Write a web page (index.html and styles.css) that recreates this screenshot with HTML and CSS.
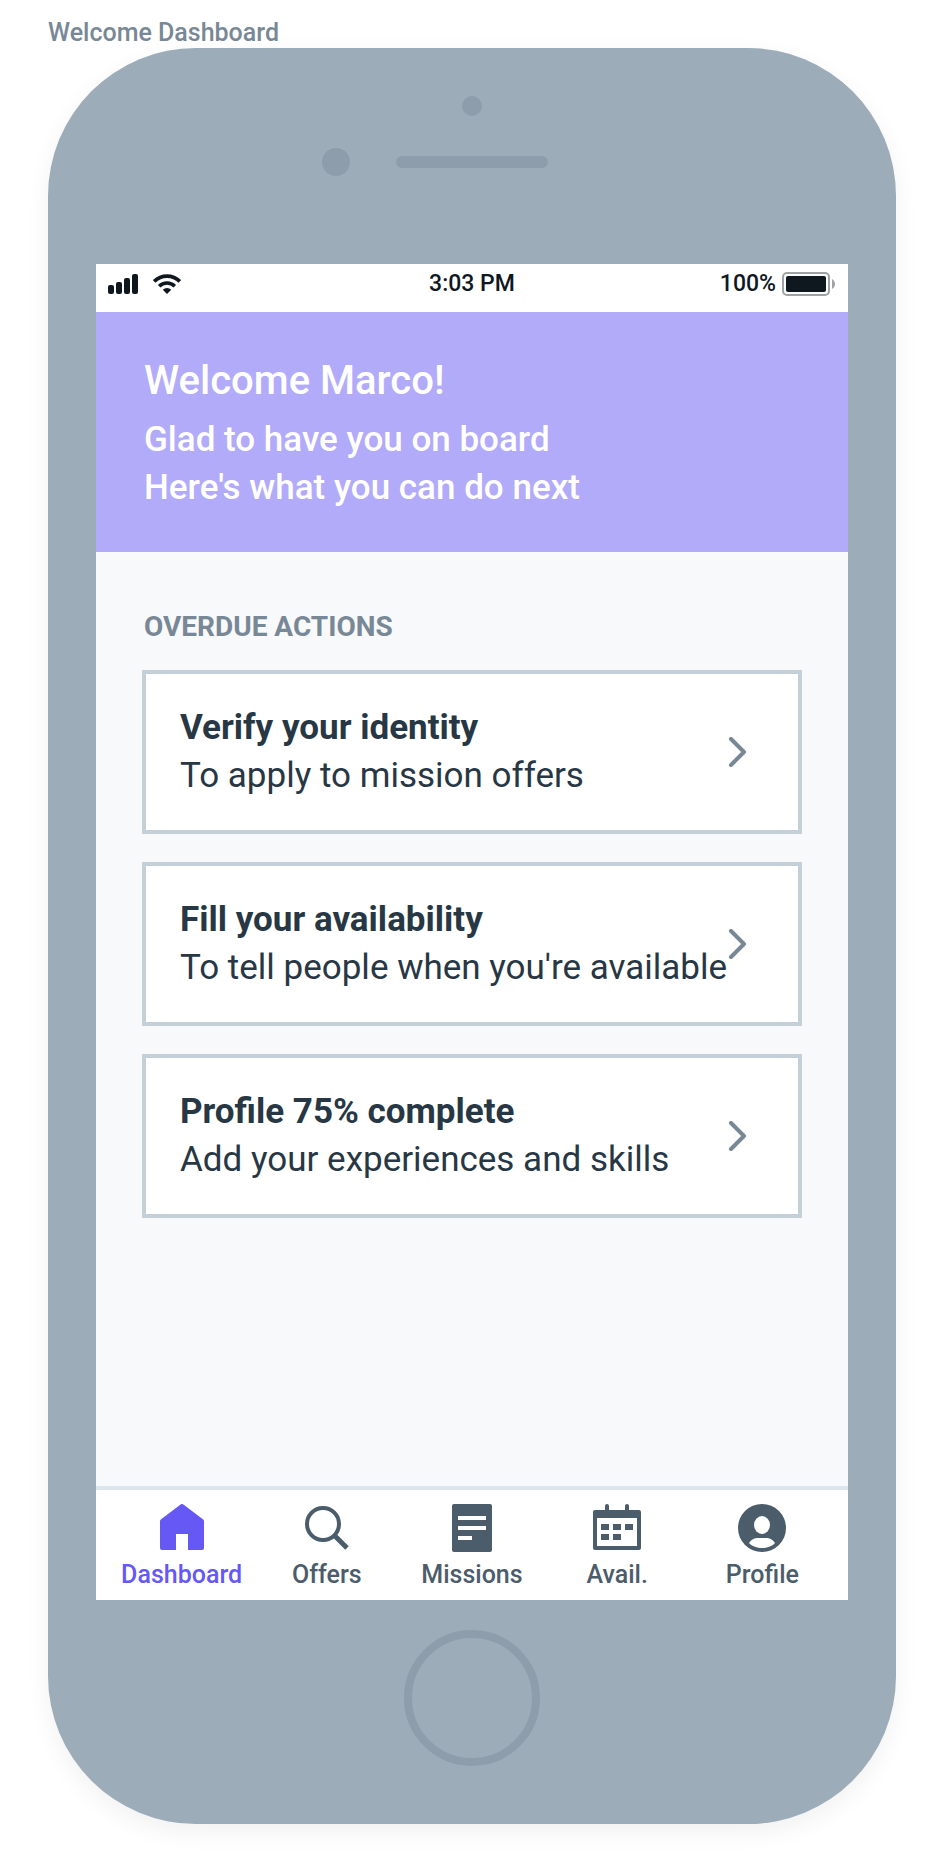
FILE: index.html
```html
<!DOCTYPE html>
<html lang="en">
<head>
  <meta charset="UTF-8">
  <meta name="viewport" content="width=device-width, initial-scale=1">
  <title>Welcome Dashboard</title>
  <link rel="stylesheet" href="styles.css">
</head>
<body>
  <p class="frame-title">Welcome Dashboard</p>

  <div class="phone">
    <!-- Camera, sensor and speaker -->
    <div class="phone-top">
      <span class="camera"></span>
      <div class="speaker-row">
        <span class="sensor"></span>
        <span class="speaker"></span>
      </div>
    </div>

    <div class="screen">
      <!-- Status bar -->
      <div class="status-bar">
        <div class="status-left">
          <svg width="30" height="20" viewBox="0 0 30 20" fill="currentColor">
            <rect x="0" y="11" width="6" height="9" rx="2"/>
            <rect x="8" y="8" width="6" height="12" rx="2"/>
            <rect x="16" y="4" width="6" height="16" rx="2"/>
            <rect x="24" y="0" width="6" height="20" rx="2"/>
          </svg>
          <svg width="28" height="20" viewBox="0 0 28 20" fill="none" stroke="currentColor" stroke-width="3.6">
            <path d="M1.2 7.4a18.1 18.1 0 0 1 25.6 0"/>
            <path d="M6.2 12.2a11 11 0 0 1 15.6 0"/>
            <path d="M14 20l-4.2-4.2a6 6 0 0 1 8.4 0z" fill="currentColor" stroke="none"/>
          </svg>
        </div>
        <span class="status-time">3:03 PM</span>
        <div class="status-right">
          <span>100%</span>
          <svg width="54" height="24" viewBox="0 0 54 24">
            <rect x="1" y="1" width="46" height="22" rx="4" fill="none" stroke="#9fa3a6" stroke-width="2"/>
            <rect x="4" y="4" width="40" height="16" rx="2" fill="#10181f"/>
            <path d="M50 7c4 2 4 8 0 10z" fill="#9fa3a6"/>
          </svg>
        </div>
      </div>

      <!-- Welcome banner -->
      <header class="banner">
        <h1>Welcome Marco!</h1>
        <p>Glad to have you on board</p>
        <p>Here's what you can do next</p>
      </header>

      <!-- Overdue actions -->
      <main class="content">
        <h2>OVERDUE ACTIONS</h2>
        <a class="card" href="#identity">
          <span class="card-text">
            <strong>Verify your identity</strong>
            <span>To apply to mission offers</span>
          </span>
          <svg class="chevron" width="18" height="30" viewBox="0 0 18 30"><path d="M3 2L16 15L3 28"/></svg>
        </a>
        <a class="card" href="#availability">
          <span class="card-text">
            <strong>Fill your availability</strong>
            <span>To tell people when you're available</span>
          </span>
          <svg class="chevron" width="18" height="30" viewBox="0 0 18 30"><path d="M3 2L16 15L3 28"/></svg>
        </a>
        <a class="card" href="#profile">
          <span class="card-text">
            <strong>Profile 75% complete</strong>
            <span>Add your experiences and skills</span>
          </span>
          <svg class="chevron" width="18" height="30" viewBox="0 0 18 30"><path d="M3 2L16 15L3 28"/></svg>
        </a>
      </main>

      <!-- Tab bar -->
      <nav class="tabs">
        <a class="tab active" href="#dashboard">
          <svg width="48" height="48" viewBox="0 0 48 48" fill="currentColor">
            <path d="M22.6 .5a2.3 2.3 0 0 1 2.8 0L45.2 15.6a2 2 0 0 1 .8 1.6V44a2 2 0 0 1-2 2H30V30H18v16H4a2 2 0 0 1-2-2V17.200a2 2 0 0 1 .8-1.600z"/>
          </svg>
          Dashboard
        </a>
        <a class="tab" href="#offers">
          <svg width="48" height="48" viewBox="0 0 48 48" fill="none" stroke="currentColor">
            <circle cx="20" cy="20" r="16" stroke-width="4"/>
            <path d="M31 31L44 44" stroke-width="5"/>
          </svg>
          Offers
        </a>
        <a class="tab" href="#missions">
          <svg width="48" height="48" viewBox="0 0 48 48">
            <rect x="4" y="0" width="40" height="48" rx="2" fill="currentColor"/>
            <path d="M10 14h28M10 24h28M10 34h14" stroke="#fff" stroke-width="4"/>
          </svg>
          Missions
        </a>
        <a class="tab" href="#availability">
          <svg width="48" height="48" viewBox="0 0 48 48" fill="currentColor">
            <path fill-rule="evenodd" d="M2 6h10V2a2 2 0 0 1 4 0v4h16V2a2 2 0 0 1 4 0v4h10a2 2 0 0 1 2 2v36a2 2 0 0 1-2 2H2a2 2 0 0 1-2-2V8a2 2 0 0 1 2-2zM4 14v28h40V14z"/>
            <path d="M8 20h8v6H8zM20 20h8v6h-8zM32 20h8v6h-8zM8 30h8v6H8zM20 30h8v6h-8z"/>
          </svg>
          Avail.
        </a>
        <a class="tab" href="#profile">
          <svg width="48" height="48" viewBox="0 0 48 48">
            <circle cx="24" cy="24" r="24" fill="currentColor"/>
            <ellipse cx="24" cy="21" rx="8" ry="9" fill="#fff"/>
            <path d="M11 39c2.500-4 6-5 9-5h8c3 0 6.500 1 9 5c-3 3.500-8 5-13 5s-10-1.500-13-5z" fill="#fff"/>
          </svg>
          Profile
        </a>
      </nav>
    </div>

    <div class="phone-bottom">
      <button class="home-button" type="button" aria-label="Home"></button>
    </div>
  </div>
</body>
</html>
```
FILE: styles.css
```css
/* Global Reset */
* {
  box-sizing: border-box;
  margin: 0;
  padding: 0;
}
body {
  display: flex;
  flex-direction: column;
  min-height: 100vh;
  padding: 18px 48px 48px;
  background-color: #fff;
  color: #273744;
  font-family: Roboto, "Liberation Sans", sans-serif;
}
a {
  color: inherit;
  text-decoration: none;
}
svg {
  display: block;
  flex: none;
}

.frame-title {
  color: #788896;
  font-size: 25px;
  font-weight: 500;
  line-height: 30px;
}

/* Phone body */
.phone {
  flex: 1;
  display: flex;
  flex-direction: column;
  padding: 0 48px;
  border-radius: 148px;
  background-color: #9dacb9;
  box-shadow: 0 8px 24px rgba(0, 0, 0, 0.06);
}
.phone-top {
  display: flex;
  flex-direction: column;
  align-items: center;
  gap: 32px;
  height: 216px;
  padding-top: 48px;
}
.camera,
.sensor,
.speaker {
  background-color: #8d9dac;
}
.camera {
  width: 20px;
  height: 20px;
  border-radius: 50%;
}
.speaker-row {
  display: grid;
  grid-template-columns: 1fr 152px 1fr;
  align-items: center;
  gap: 46px;
  width: 100%;
}
.sensor {
  justify-self: end;
  width: 28px;
  height: 28px;
  border-radius: 50%;
}
.speaker {
  height: 12px;
  border-radius: 6px;
}
.phone-bottom {
  display: flex;
  justify-content: center;
  height: 224px;
  padding-top: 30px;
}
.home-button {
  width: 136px;
  height: 136px;
  border: 8px solid #8d9dac;
  border-radius: 50%;
  background: none;
  cursor: pointer;
}

/* Screen */
.screen {
  flex: 1;
  display: flex;
  flex-direction: column;
  background-color: #f8f9fb;
}
.status-bar {
  display: grid;
  grid-template-columns: 1fr auto 1fr;
  align-items: center;
  height: 48px;
  padding: 0 12px 8px;
  background-color: #fff;
  color: #10181f;
  font-size: 23px;
  font-weight: 500;
  line-height: 30px;
}
.status-left {
  display: flex;
  gap: 15px;
}
.status-right {
  display: flex;
  align-items: center;
  justify-content: flex-end;
  gap: 6px;
}

/* Welcome banner */
.banner {
  padding: 40px 48px;
  background-color: #b2abfa;
  color: #fff;
  font-size: 35px;
  font-weight: 500;
  line-height: 48px;
}
.banner h1 {
  margin-bottom: 6px;
  font-size: 40px;
  font-weight: 500;
  line-height: 58px;
}

/* Overdue actions */
.content {
  flex: 1;
  display: flex;
  flex-direction: column;
  gap: 28px;
  padding: 60px 46px;
}
.content h2 {
  padding-left: 2px;
  color: #788896;
  font-size: 28px;
  font-weight: 700;
  line-height: 30px;
}
.card {
  display: flex;
  align-items: center;
  justify-content: space-between;
  padding: 30px 52px 30px 34px;
  border: 4px solid #c3cfd9;
  background-color: #fff;
  font-size: 35px;
  line-height: 48px;
}
.card-text {
  display: flex;
  flex-direction: column;
  min-width: 0;
  white-space: nowrap;
}
.chevron {
  fill: none;
  stroke: #788896;
  stroke-width: 4;
  stroke-linecap: round;
  stroke-linejoin: round;
}

/* Tab bar */
.tabs {
  display: grid;
  grid-template-columns: repeat(5, 1fr);
  padding: 14px 13px 10px;
  border-top: 4px solid #dde5ec;
  background-color: #fff;
}
.tab {
  display: flex;
  flex-direction: column;
  align-items: center;
  gap: 8px;
  color: #4b5c6b;
  font-size: 25px;
  font-weight: 500;
  line-height: 30px;
}
.tab.active {
  color: #6558f5;
}
```
